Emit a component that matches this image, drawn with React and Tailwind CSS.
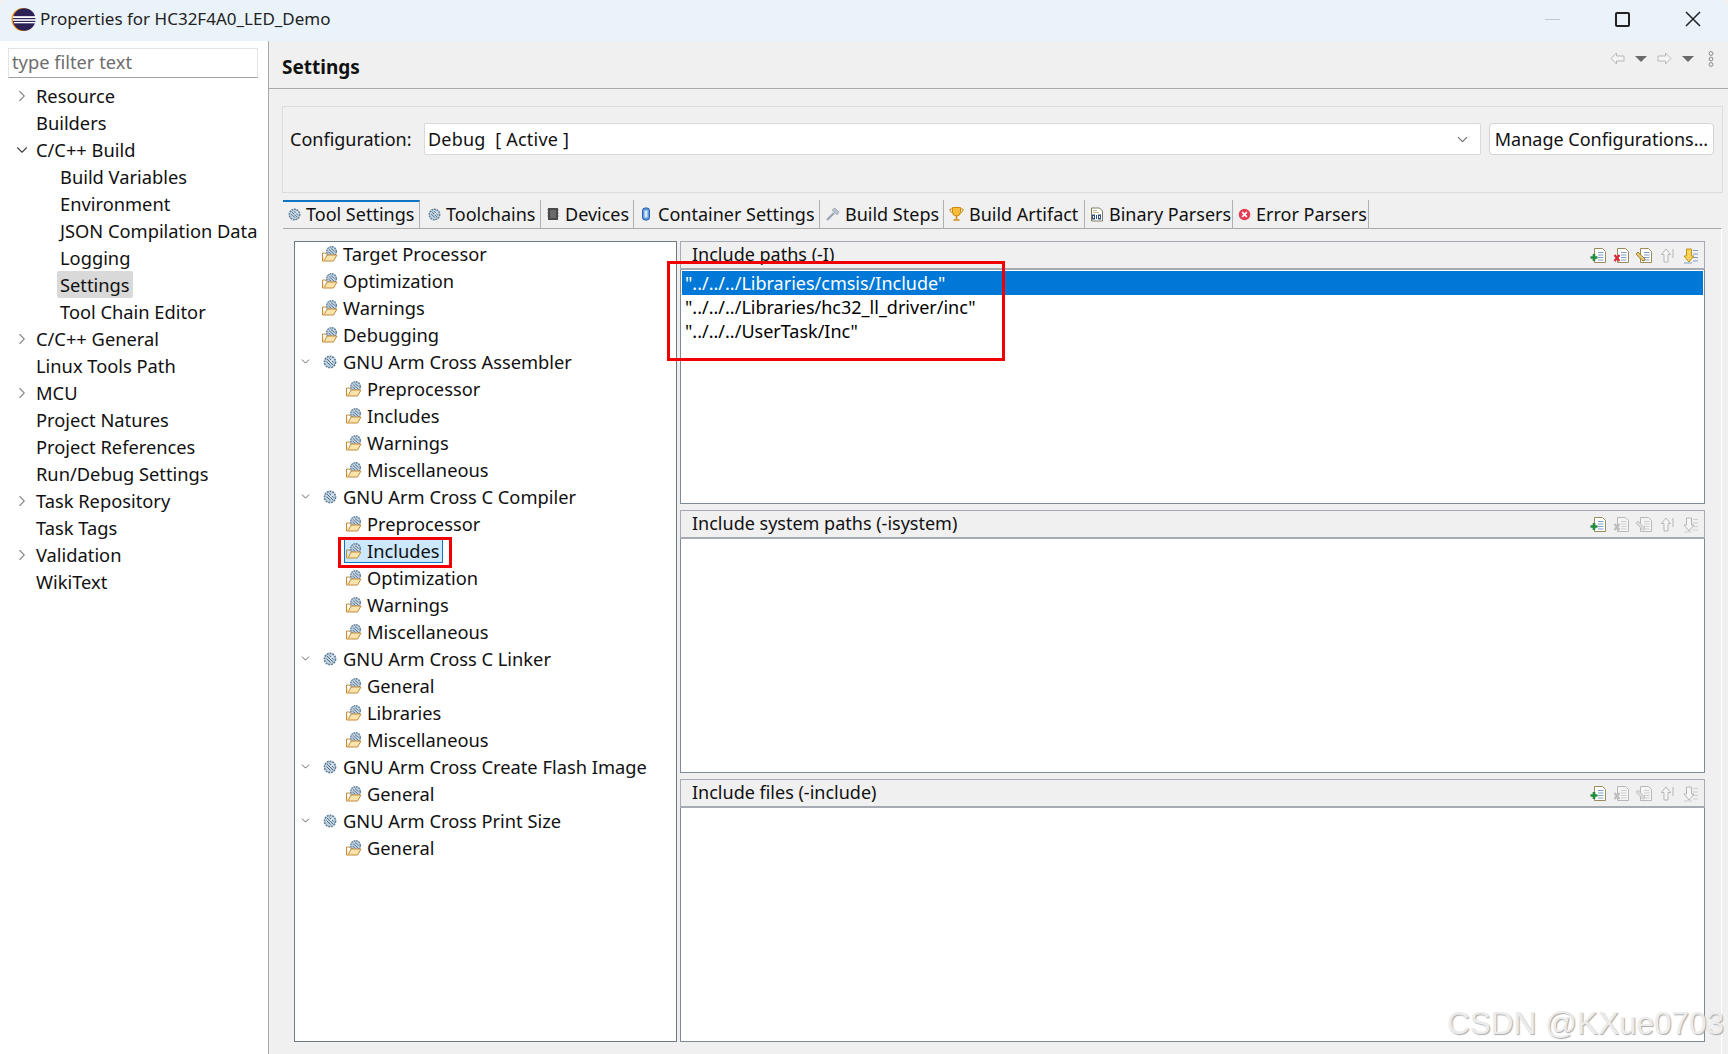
import React from "react";
import { ChevronRight, ChevronDown } from "lucide-react";

const FONT = "font-['Noto_Sans','Noto_Sans_CJK_SC',sans-serif]";

const prefs = [
  { label: "Resource", arrow: "right" },
  { label: "Builders" },
  { label: "C/C++ Build", arrow: "down" },
  { label: "Build Variables", child: true },
  { label: "Environment", child: true },
  { label: "JSON Compilation Data", child: true },
  { label: "Logging", child: true },
  { label: "Settings", child: true, selected: true },
  { label: "Tool Chain Editor", child: true },
  { label: "C/C++ General", arrow: "right" },
  { label: "Linux Tools Path" },
  { label: "MCU", arrow: "right" },
  { label: "Project Natures" },
  { label: "Project References" },
  { label: "Run/Debug Settings" },
  { label: "Task Repository", arrow: "right" },
  { label: "Task Tags" },
  { label: "Validation", arrow: "right" },
  { label: "WikiText" },
];

const toolTree = [
  { label: "Target Processor", level: 0 },
  { label: "Optimization", level: 0 },
  { label: "Warnings", level: 0 },
  { label: "Debugging", level: 0 },
  { label: "GNU Arm Cross Assembler", group: true },
  { label: "Preprocessor", level: 1 },
  { label: "Includes", level: 1 },
  { label: "Warnings", level: 1 },
  { label: "Miscellaneous", level: 1 },
  { label: "GNU Arm Cross C Compiler", group: true },
  { label: "Preprocessor", level: 1 },
  { label: "Includes", level: 1, selected: true },
  { label: "Optimization", level: 1 },
  { label: "Warnings", level: 1 },
  { label: "Miscellaneous", level: 1 },
  { label: "GNU Arm Cross C Linker", group: true },
  { label: "General", level: 1 },
  { label: "Libraries", level: 1 },
  { label: "Miscellaneous", level: 1 },
  { label: "GNU Arm Cross Create Flash Image", group: true },
  { label: "General", level: 1 },
  { label: "GNU Arm Cross Print Size", group: true },
  { label: "General", level: 1 },
];

const GearIcon = ({ size = 14 }) => (
  <svg width={size} height={size} viewBox="0 0 14 14" className="shrink-0">
    <circle cx="7" cy="7" r="5.6" fill="#c3d3e0" stroke="#5f7f9b" strokeWidth="1.6" strokeDasharray="2 0.8" />
    <path d="M4 4l6 6M6.5 3.5l4 4M3.5 6.5l4 4" stroke="#4d6c8a" strokeWidth="1" />
    <path d="M7 7l3.5-3" stroke="#fff" strokeWidth="1" />
  </svg>
);

const FolderGearIcon = () => (
  <svg width="18" height="18" viewBox="0 0 18 18" className="shrink-0">
    <circle cx="10.5" cy="6.5" r="4.8" fill="#c3d3e0" stroke="#5f7f9b" strokeWidth="1.4" strokeDasharray="1.8 0.7" />
    <path d="M8 4.5l5 4.5M10 3.5l3.5 3M7.5 7l3 2.5" stroke="#4d6c8a" strokeWidth="0.9" />
    <path d="M1.5 8v8h11l3.5-6H6l-2.5 5" fill="#fbe3ac" stroke="#c28a3a" strokeWidth="1" />
    <path d="M1.5 16V8h3l1 1.5" fill="none" stroke="#c28a3a" strokeWidth="1" />
  </svg>
);

const EclipseLogo = () => (
  <svg width="25" height="25" viewBox="0 0 25 25" className="shrink-0">
    <circle cx="12" cy="12.5" r="11.5" fill="#f7941e" />
    <circle cx="13.2" cy="12.5" r="11.3" fill="#2c2255" />
    <rect x="2" y="9.2" width="23" height="1.8" fill="#fff" />
    <rect x="2" y="12.2" width="23" height="1.6" fill="#fff" />
    <rect x="3" y="15" width="21" height="1.3" fill="#fff" />
  </svg>
);

const DocBase = ({ disabled }) => (
  <>
    <path d="M4.5 1.5h8l3 3v11h-11z" fill={disabled ? "#f4f4f4" : "#fff"} stroke={disabled ? "#b8b8b8" : "#9b8a5a"} />
    <path d="M8 5.5h5.5M8 8h5.5M8 10.5h5.5M8 13h5.5" stroke={disabled ? "#cfcfcf" : "#7f9fc8"} />
  </>
);

const ToolIcon = ({ kind, active }) => (
  <svg width="17" height="17" viewBox="0 0 17 17" className="shrink-0">
    {kind === "add" && (
      <>
        <DocBase />
        <path d="M4 7v7M0.5 10.5h7" stroke="#1f8a3b" strokeWidth="2.6" />
      </>
    )}
    {kind === "del" && (
      <>
        <DocBase disabled={!active} />
        <path d="M1.5 8l5 6M6.5 8l-5 6" stroke={active ? "#d9283c" : "#bdbdbd"} strokeWidth="2.2" />
      </>
    )}
    {kind === "edit" && (
      <>
        <DocBase disabled={!active} />
        <path d="M2 5l7 7-1 2-2-.5-6-6.5z" fill={active ? "#e8c56c" : "#dcdcdc"} stroke={active ? "#8a6d2a" : "#bdbdbd"} strokeWidth="0.8" />
      </>
    )}
    {kind === "up" && (
      <>
        <path d="M7 2L2.5 7.5H5V15h4V7.5h2.5z" fill="#f6f6f6" stroke="#b5b5b5" />
        <path d="M14 2v9" stroke="#b5b5b5" />
      </>
    )}
    {kind === "down" && (
      <>
        <path d="M11 3.5h5M11 7h5M11 10.5h5M11 14h5" stroke={active ? "#7f9fc8" : "#cfcfcf"} />
        <path d="M7 15l-5-6h2.5V2h5v7H12z" fill={active ? "#f7d25c" : "#f6f6f6"} stroke={active ? "#c0901c" : "#b5b5b5"} />
        <path d="M2 16h8" stroke={active ? "#7f9fc8" : "#cfcfcf"} />
      </>
    )}
  </svg>
);

const TabIcon = ({ kind }) => {
  if (kind === "gear") return <GearIcon size={13} />;
  if (kind === "chip")
    return (
      <svg width="14" height="14" viewBox="0 0 14 14" className="shrink-0">
        <rect x="2" y="1" width="10" height="12" fill="#4a4a4a" />
        <path d="M1 3h1M1 6h1M1 9h1M12 3h1M12 6h1M12 9h1" stroke="#999" />
        <rect x="4" y="3" width="6" height="8" fill="#6a6a6a" />
      </svg>
    );
  if (kind === "can")
    return (
      <svg width="14" height="14" viewBox="0 0 14 14" className="shrink-0">
        <rect x="3.5" y="1" width="7" height="12" rx="2.5" fill="#5b9be0" stroke="#2a5ea8" />
        <rect x="5.5" y="3.5" width="3" height="7" fill="#d6e8fa" />
      </svg>
    );
  if (kind === "hammer")
    return (
      <svg width="15" height="15" viewBox="0 0 15 15" className="shrink-0">
        <path d="M2 13l7-7" stroke="#9aa7b3" strokeWidth="2.4" />
        <path d="M7 3l3-2 4 4-2 3z" fill="#b7c3ce" stroke="#8b98a5" strokeWidth="0.6" />
      </svg>
    );
  if (kind === "trophy")
    return (
      <svg width="15" height="16" viewBox="0 0 15 16" className="shrink-0">
        <path d="M3.5 1.5h8V6a4 4 0 0 1-8 0z" fill="#f6bd3c" stroke="#d08a10" />
        <path d="M3.5 3H1v2l2.5 2M11.5 3H14v2l-2.5 2" fill="none" stroke="#d08a10" />
        <path d="M7.5 10v3M4.5 14h6" stroke="#d08a10" strokeWidth="1.6" />
      </svg>
    );
  if (kind === "binary")
    return (
      <svg width="14" height="15" viewBox="0 0 14 15" className="shrink-0">
        <path d="M1.5 1h8l3 3v10h-11z" fill="#fff" stroke="#7c7a62" />
        <path d="M3 3.5h4M3 5.5h6" stroke="#c8b88a" />
        <rect x="2.5" y="8" width="2" height="4" fill="none" stroke="#2c4f86" />
        <path d="M6.5 8v4" stroke="#2c4f86" />
        <rect x="8.5" y="8" width="2" height="4" fill="none" stroke="#2c4f86" />
      </svg>
    );
  return (
    <svg width="13" height="13" viewBox="0 0 13 13" className="shrink-0">
      <circle cx="6.5" cy="6.5" r="5.8" fill="#e43d53" />
      <path d="M4.2 4.2l4.6 4.6M8.8 4.2l-4.6 4.6" stroke="#fff" strokeWidth="1.7" />
    </svg>
  );
};

const tabs = [
  { label: "Tool Settings", icon: "gear", width: "w-[137px] pl-[5px]", active: true },
  { label: "Toolchains", icon: "gear", width: "w-[121px] pl-[8px]" },
  { label: "Devices", icon: "chip", width: "w-[93px] pl-[5px]" },
  { label: "Container Settings", icon: "can", width: "w-[186px] pl-[5px]" },
  { label: "Build Steps", icon: "hammer", width: "w-[124px] pl-[5px]" },
  { label: "Build Artifact", icon: "trophy", width: "w-[141px] pl-[5px]" },
  { label: "Binary Parsers", icon: "binary", width: "w-[148px] pl-[5px]" },
  { label: "Error Parsers", icon: "error", width: "w-[136px] pl-[5px]" },
];

const PathPanel = ({ title, active, rows = [] }) => (
  <div className="flex-1 flex flex-col min-h-0">
    <div className="h-[29px] shrink-0 flex items-center justify-between pl-[11px] pr-[5px] border border-[#a6abb3] border-b-2 bg-[#f0f0f0]">
      <span className="text-[#111] -mt-[2px]">{title}</span>
      <div className="flex items-center gap-[6px]">
        <ToolIcon kind="add" />
        <ToolIcon kind="del" active={active} />
        <ToolIcon kind="edit" active={active} />
        <ToolIcon kind="up" />
        <ToolIcon kind="down" active={active} />
      </div>
    </div>
    <div className="flex-1 bg-white border border-t-0 border-[#7f8a99] pt-[1px] px-[1px]">
      {rows.map((row, i) => (
        <div
          key={row}
          className={`h-[24px] flex items-center pl-[3px] ${i === 0 ? "bg-[#0078d7] text-white" : "text-black"}`}
        >
          {row}
        </div>
      ))}
    </div>
  </div>
);

export default function App() {
  return (
    <div className={`${FONT} relative w-[1728px] h-[1054px] flex flex-col overflow-hidden bg-[#f0f0f0] text-[18px] text-[#111]`}>
      <div className="h-[41px] shrink-0 flex items-center justify-between bg-[#eaf3f9] rounded-t-[8px] pl-[11px] pr-[27px] pb-[3px]">
        <div className="flex items-center gap-[4px]">
          <EclipseLogo />
          <span className="text-[#222] text-[17px]">Properties for HC32F4A0_LED_Demo</span>
        </div>
        <div className="flex items-center gap-[55px]">
          <div className="w-[15px] h-px bg-[#c4c8cb]" />
          <div className="w-[15px] h-[15px] border-2 border-[#222] rounded-[2px]" />
          <svg width="16" height="16" viewBox="0 0 16 16">
            <path d="M1 1l14 14M15 1L1 15" stroke="#222" strokeWidth="1.5" />
          </svg>
        </div>
      </div>

      <div className="flex-1 flex min-h-0">
        <aside className="w-[269px] shrink-0 bg-white border-r border-[#a8a8a8] pt-[7px] text-[18.3px]">
          <div className="ml-[8px] w-[250px] h-[30px] border border-[#e3e3e3] border-b-[#a0a0a0] flex items-center pl-[3px] text-[#6d6d6d] pb-[2px]">
            type filter text
          </div>
          <div className="mt-[4px] w-[258px] overflow-hidden">
            {prefs.map((p) => (
              <div key={p.label} className="h-[27px] flex items-center whitespace-nowrap">
                <div className="w-[36px] shrink-0 flex justify-end pr-[5px]">
                  {p.arrow === "right" && <ChevronRight size={18} strokeWidth={1.5} className="text-[#8a8a8a]" />}
                  {p.arrow === "down" && <ChevronDown size={18} strokeWidth={1.5} className="text-[#444]" />}
                </div>
                <span
                  className={
                    p.selected
                      ? "ml-[21px] px-[3px] h-[27px] leading-[27px] bg-[#d9d9d9] rounded-[2px]"
                      : p.child
                        ? "ml-[24px]"
                        : ""
                  }
                >
                  {p.label}
                </span>
              </div>
            ))}
          </div>
        </aside>

        <main className="flex-1 min-w-0 flex flex-col">
          <div className="h-[48px] shrink-0 flex items-center justify-between pl-[13px] pr-[14px] border-b border-[#a8a8a8]">
            <span className="font-bold text-[19px] text-[#111] mt-[6px]">Settings</span>
            <div className="flex items-center gap-[10px] -mt-[12px]">
              <svg width="15" height="13" viewBox="0 0 15 13"><path d="M1 6.5L6.5 1v3H14v5H6.5v3z" fill="#f4f4f4" stroke="#b8b8b8" /></svg>
              <div className="w-0 h-0 border-x-[6px] border-x-transparent border-t-[6px] border-t-[#6a6a6a]" />
              <svg width="15" height="13" viewBox="0 0 15 13"><path d="M14 6.5L8.5 1v3H1v5h7.5v3z" fill="#f4f4f4" stroke="#b8b8b8" /></svg>
              <div className="w-0 h-0 border-x-[6px] border-x-transparent border-t-[6px] border-t-[#6a6a6a]" />
              <svg width="6" height="16" viewBox="0 0 6 16" className="ml-[4px]">
                <circle cx="3" cy="2.5" r="1.9" fill="none" stroke="#888" />
                <circle cx="3" cy="8" r="1.9" fill="none" stroke="#888" />
                <circle cx="3" cy="13.5" r="1.9" fill="none" stroke="#888" />
              </svg>
            </div>
          </div>

          <div className="ml-[13px] mr-[5px] mt-[17px] h-[87px] shrink-0 border border-[#dcdcdc] pl-[7px] pr-[8px] pt-[16px] flex items-start">
            <span className="h-[32px] flex items-center w-[134px] shrink-0 pt-[1px]">Configuration:</span>
            <div className="flex-1 h-[32px] bg-white border border-[#d9d9d9] rounded-[2px] flex items-center justify-between pl-[3px] pr-[9px]">
              <span className="whitespace-pre tracking-[0.2px]">Debug  [ Active ]</span>
              <ChevronDown size={17} strokeWidth={1.5} className="text-[#666]" />
            </div>
            <div className="ml-[8px] w-[225px] h-[32px] bg-white border border-[#d4d4d4] rounded-[4px] flex items-center justify-center whitespace-nowrap pt-[1px]">
              Manage Configurations...
            </div>
          </div>

          <div className="ml-[14px] mr-[6px] mt-[7px] h-[28px] shrink-0 flex">
            {tabs.map((t) => (
              <div
                key={t.label}
                className={`${t.width} shrink-0 h-[28px] flex items-center gap-[5px] whitespace-nowrap border-r border-[#b0b0b0] ${
                  t.active ? "border-t-2 border-t-[#0f74c4] pb-[2px]" : ""
                }`}
              >
                <TabIcon kind={t.icon} />
                <span>{t.label}</span>
              </div>
            ))}
          </div>

          <div className="ml-[14px] mr-[6px] flex-1 min-h-0 flex border-t border-t-[#a8a8a8] border-r border-r-white pl-[11px] pr-[16px] pt-[12px] pb-[12px] gap-[3px]">
            <div className="w-[383px] shrink-0 bg-white border border-[#6f7884] overflow-hidden text-[18.3px]">
              <div className="-mt-[2px]">
                {toolTree.map((n, i) => (
                  <div key={i} className="h-[27px] flex items-center whitespace-nowrap">
                    {n.group ? (
                      <>
                        <div className="w-[24px] shrink-0 flex justify-end pr-[7px]">
                          <ChevronDown size={13} strokeWidth={1.5} className="text-[#444]" />
                        </div>
                        <div className="w-[22px] shrink-0 flex justify-center"><GearIcon /></div>
                        <span className="ml-[2px]">{n.label}</span>
                      </>
                    ) : (
                      <div className={`flex items-center ${n.level === 1 ? "ml-[50px]" : "ml-[26px]"}`}>
                        <div
                          className={`flex items-center pr-[2px] h-[25px] ${
                            n.selected ? "bg-[#cce8ff] border border-[#0f74c4] -ml-px" : ""
                          }`}
                        >
                          <FolderGearIcon />
                          <span className="ml-[4px]">{n.label}</span>
                        </div>
                      </div>
                    )}
                  </div>
                ))}
              </div>
            </div>

            <div className="flex-1 min-w-0 flex flex-col gap-[6px]">
              <PathPanel
                title="Include paths (-I)"
                active
                rows={['"../../../Libraries/cmsis/Include"', '"../../../Libraries/hc32_ll_driver/inc"', '"../../../UserTask/Inc"']}
              />
              <PathPanel title="Include system paths (-isystem)" />
              <PathPanel title="Include files (-include)" />
            </div>
          </div>
        </main>
      </div>

      {/* red annotation boxes drawn over the screenshot */}
      <div className="absolute left-[667px] top-[261px] w-[338px] h-[100px] border-[3px] border-[#f00000]" />
      <div className="absolute left-[338px] top-[537px] w-[114px] h-[31px] border-[3px] border-[#f00000]" />

      <div className="absolute left-[1447px] top-[1008px] text-[31.5px] leading-none whitespace-nowrap font-['Liberation_Sans',sans-serif] text-[#ececec] [text-shadow:1px_1px_1px_#aaaaaa]">
        CSDN @KXue0703
      </div>
    </div>
  );
}
